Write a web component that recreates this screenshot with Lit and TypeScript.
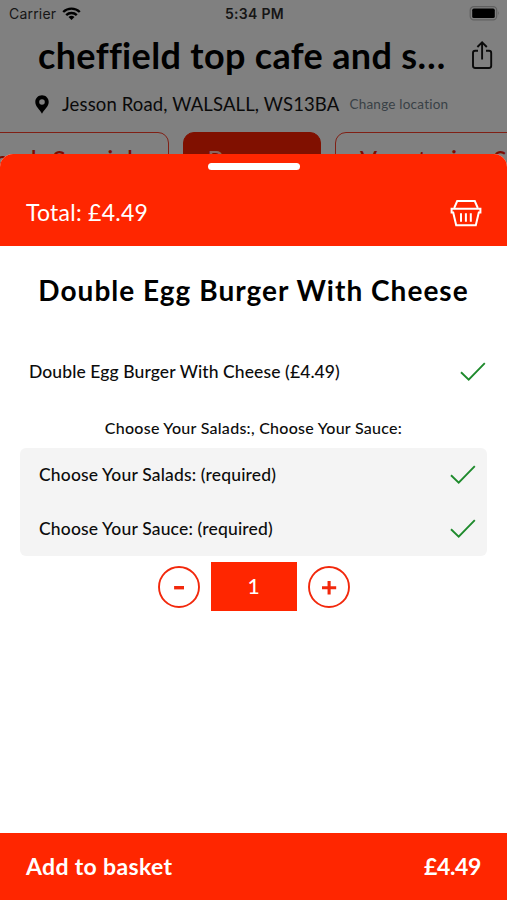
import { LitElement, html, css, svg } from "lit";
import { customElement, property } from "lit/decorators.js";

@customElement("check-mark")
export class CheckMark extends LitElement {
  static styles = css`
    :host { display: block; width: 26px; height: 20px; }
    svg { display: block; }
  `;
  render() {
    return html`<svg width="26" height="20" viewBox="0 0 26 20" fill="none" stroke="#1e8a2c" stroke-width="1.9">
      <path d="M1 10.3 L8.7 17.6 L24.8 1.2" />
    </svg>`;
  }
}

@customElement("option-row")
export class OptionRow extends LitElement {
  @property() label = "";
  static styles = css`
    :host { display: flex; justify-content: space-between; align-items: center; }
    .label { color: #0c0c0c; white-space: nowrap; padding-bottom: 2px; }
  `;
  render() {
    return html`<span class="label">${this.label}</span><check-mark></check-mark>`;
  }
}

@customElement("round-button")
export class RoundButton extends LitElement {
  @property() kind = "minus";
  static styles = css`
    :host { display: block; width: 42px; height: 42px; }
    svg { display: block; }
  `;
  render() {
    return html`<svg width="42" height="42" viewBox="0 0 42 42" fill="none" stroke="#f2280c">
      <circle cx="21" cy="21" r="20" stroke-width="1.9" />
      ${this.kind === "plus"
        ? svg`<path d="M14 21.7 H28.2 M21.1 14.9 V28.6" stroke-width="3.1" />`
        : svg`<path d="M16.1 21.7 H26" stroke-width="3.4" />`}
    </svg>`;
  }
}

@customElement("app-root")
export class AppRoot extends LitElement {
  static styles = css`
    :host {
      display: block;
      position: relative;
      width: 507px;
      height: 900px;
      overflow: hidden;
      background: #808080;
      font-family: Lato, "Liberation Sans", sans-serif;
      color: #000;
    }
    * { box-sizing: border-box; }
    svg { display: block; flex: none; }

    .status {
      display: grid;
      grid-template-columns: 1fr auto 1fr;
      align-items: center;
      height: 26px;
      padding: 1px 7px 0 9px;
      font: 400 14px/18px Inter, sans-serif;
      color: #161616;
    }
    .carrier { display: flex; align-items: center; gap: 6px; letter-spacing: 0.2px; }
    .time { font-weight: 600; letter-spacing: 0.3px; }
    .battery { justify-self: end; }

    .title-row {
      display: flex;
      justify-content: space-between;
      align-items: center;
      height: 60px;
      padding: 0 14px 0 38px;
    }
    .title {
      padding-bottom: 3px;
      font-weight: 700;
      font-size: 36px;
      line-height: 44px;
      letter-spacing: 0.34px;
      white-space: pre;
    }
    .share { margin-top: -2px; }
    .address {
      display: flex;
      align-items: center;
      height: 36px;
      padding-left: 35px;
      white-space: nowrap;
    }
    .street { margin-left: 13px; font-size: 18.5px; letter-spacing: 0.13px; color: #0a0a0a; }
    .change { margin-left: 10px; font-size: 13.5px; letter-spacing: 0.23px; color: #394146; }

    .tabs { display: flex; gap: 14px; margin: 10px 0 0 -32px; }
    .tab {
      flex: none;
      height: 60px;
      padding-top: 11px;
      border: 1.5px solid #802015;
      border-radius: 11px;
      color: #7c0b00;
      text-align: center;
      font: 500 25px/30px Lato, sans-serif;
      letter-spacing: 0.6px;
      white-space: nowrap;
    }
    .tab.first { width: 201px; padding-right: 9px; }
    .tab.mid { width: 138px; }
    .tab.last { width: 290px; text-align: left; padding-left: 24px; letter-spacing: 0.85px; }
    .tab.on { background: #801000; color: #8a6560; border-color: #801000; }

    .sheet {
      position: absolute;
      inset: 154px 0 0 0;
      display: flex;
      flex-direction: column;
      background: #fff;
      border-radius: 13px 13px 0 0;
      overflow: hidden;
    }
    .head {
      height: 92px;
      background: #ff2600;
      color: #fff;
      display: flex;
      flex-direction: column;
      padding: 9px 25px 0 26px;
    }
    .grip { align-self: center; width: 92px; height: 7px; border-radius: 4px; background: #fff; }
    .head-row { display: flex; justify-content: space-between; align-items: center; margin-top: 26px; }
    .total { font-size: 23px; line-height: 32px; padding-bottom: 1px; letter-spacing: 0.25px; }

    .name {
      margin: 0;
      padding-top: 25px;
      text-align: center;
      font-weight: 700;
      font-size: 28px;
      line-height: 38px;
      letter-spacing: 1.02px;
      white-space: nowrap;
    }
    .main-row { margin-top: 50px; padding: 0 21px 0 29px; height: 26px; font-size: 17.5px; font-weight: 500; letter-spacing: 0.1px; }
    .hint {
      margin-top: 33px;
      text-align: center;
      font-size: 16px;
      font-weight: 500;
      line-height: 20px;
      letter-spacing: 0.27px;
      color: #0c0c0c;
    }
    .group {
      margin: 10px 20px 0;
      height: 108px;
      border-radius: 6px;
      background: #f4f4f4;
      display: grid;
      grid-template-rows: 1fr 1fr;
      padding: 0 11px 0 19px;
      font-size: 17.5px;
      font-weight: 500;
      letter-spacing: 0.16px;
    }
    .qty { display: flex; justify-content: center; align-items: center; gap: 11px; margin-top: 6px; height: 49px; }
    .count {
      width: 86px;
      height: 49px;
      background: #ff2600;
      color: #fff;
      text-align: center;
      font-size: 21px;
      font-weight: 500;
      line-height: 48px;
    }
    .footer {
      margin-top: auto;
      height: 67px;
      display: flex;
      justify-content: space-between;
      align-items: center;
      padding: 0 26px 2px;
      background: #ff2600;
      color: #fff;
      font-size: 23px;
      font-weight: 700;
      letter-spacing: 0.34px;
    }
    .price { letter-spacing: -0.35px; }
  `;

  render() {
    return html`
      <div class="status">
        <div class="carrier">
          Carrier
          <svg width="19" height="13" viewBox="0 0 19 13" fill="none" stroke="#000" stroke-width="2.4">
            <path d="M1.2 5 A12 12 0 0 1 17.8 5" />
            <path d="M4.2 8.2 A7.6 7.6 0 0 1 14.8 8.2" />
            <path d="M6.5 10.1 A4.3 4.3 0 0 1 12.5 10.1 L9.5 13 Z" fill="#000" stroke="none" />
          </svg>
        </div>
        <div class="time">5:34 PM</div>
        <svg class="battery" width="31" height="15" viewBox="0 0 31 15">
          <rect x="1.2" y="0.7" width="26.5" height="13.2" rx="3.6" fill="none" stroke="#606060" stroke-width="1.2" />
          <rect x="3.2" y="2.6" width="22.6" height="9.4" rx="1.6" fill="#000" />
          <path d="M29 5 Q30.8 7.3 29 9.6 Z" fill="#606060" />
        </svg>
      </div>
      <div class="title-row">
        <div class="title">cheffield top cafe and s…</div>
        <svg class="share" width="22" height="30" viewBox="0 0 22 30" fill="none" stroke="#0a0a0a" stroke-width="1.9">
          <path d="M7 10.8 H4.2 Q2 10.8 2 13 V25.8 Q2 28 4.2 28 H18 Q20.2 28 20.2 25.8 V13 Q20.2 10.8 18 10.8 H15" />
          <path d="M11.1 19.4 V2.6 M6.4 7 L11.1 2.3 L15.8 7" />
        </svg>
      </div>
      <div class="address">
        <svg width="14" height="19" viewBox="0 0 14 19">
          <path fill="#000" fill-rule="evenodd" d="M7 0.3 C3.2 0.3 0.3 3.2 0.3 7 C0.3 11.6 5 14.6 7 18.7 C9 14.6 13.7 11.6 13.7 7 C13.7 3.2 10.8 0.3 7 0.3 Z M7 4.2 A2.8 2.8 0 1 1 7 9.8 A2.8 2.8 0 1 1 7 4.2 Z" />
        </svg>
        <span class="street">Jesson Road, WALSALL, WS13BA</span>
        <span class="change">Change location</span>
      </div>
      <div class="tabs">
        <div class="tab first">Lamb Specials</div>
        <div class="tab mid on">Burgers</div>
        <div class="tab last">Vegetarian Specials</div>
      </div>

      <div class="sheet">
        <div class="head">
          <div class="grip"></div>
          <div class="head-row">
            <span class="total">Total: £4.49</span>
            <svg width="32" height="28" viewBox="0 0 32 28" fill="none" stroke="#fff" stroke-width="2">
              <path d="M4.2 9 L7.2 2 H24.8 L27.8 9" />
              <path d="M1.6 9.8 H30.4 V13.4 H28.8 L25.8 26.2 H6.2 L3.2 13.4 H1.6 Z" />
              <path d="M11 14.3 V22.8 M15.9 14.3 V22.8 M20.8 14.3 V22.8" />
            </svg>
          </div>
        </div>
        <h1 class="name">Double Egg Burger With Cheese</h1>
        <option-row class="main-row" label="Double Egg Burger With Cheese (£4.49)"></option-row>
        <div class="hint">Choose Your Salads:, Choose Your Sauce:</div>
        <div class="group">
          <option-row label="Choose Your Salads: (required)"></option-row>
          <option-row label="Choose Your Sauce: (required)"></option-row>
        </div>
        <div class="qty">
          <round-button kind="minus"></round-button>
          <div class="count">1</div>
          <round-button kind="plus"></round-button>
        </div>
        <div class="footer"><span>Add to basket</span><span class="price">£4.49</span></div>
      </div>
    `;
  }
}
